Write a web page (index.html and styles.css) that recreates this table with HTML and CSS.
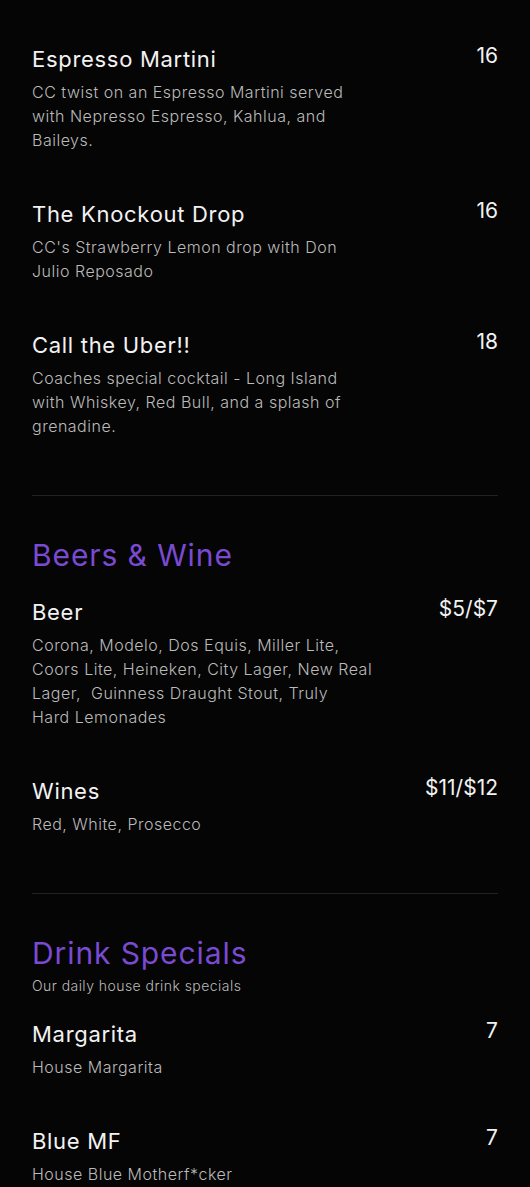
FILE: index.html
```html
<!DOCTYPE html>
<html lang="en">
<head>
    <meta charset="UTF-8">
    <meta name="viewport" content="width=device-width, initial-scale=1.0">
    <title>Drinks Menu</title>
    <link rel="stylesheet" href="styles.css">
</head>
<body>
    <main class="menu">
        <section class="menu-section">
            <div class="items">
                <div class="item">
                    <div class="item-head">
                        <h3 class="item-name">Espresso Martini</h3>
                        <span class="item-price">16</span>
                    </div>
                    <p class="item-desc">CC twist on an Espresso Martini served with Nepresso Espresso, Kahlua, and Baileys.</p>
                </div>
                <div class="item">
                    <div class="item-head">
                        <h3 class="item-name">The Knockout Drop</h3>
                        <span class="item-price">16</span>
                    </div>
                    <p class="item-desc">CC's Strawberry Lemon drop with Don Julio Reposado</p>
                </div>
                <div class="item">
                    <div class="item-head">
                        <h3 class="item-name">Call the Uber!!</h3>
                        <span class="item-price">18</span>
                    </div>
                    <p class="item-desc">Coaches special cocktail - Long Island with Whiskey, Red Bull, and a splash of grenadine.</p>
                </div>
            </div>
        </section>

        <hr class="divider">

        <section class="menu-section">
            <h2 class="section-title">Beers &amp; Wine</h2>
            <div class="items">
                <div class="item">
                    <div class="item-head">
                        <h3 class="item-name">Beer</h3>
                        <span class="item-price">$5/$7</span>
                    </div>
                    <p class="item-desc">Corona, Modelo, Dos Equis, Miller Lite, Coors Lite, Heineken, City Lager, New Real Lager,&nbsp; Guinness Draught Stout, Truly<br>Hard Lemonades</p>
                </div>
                <div class="item">
                    <div class="item-head">
                        <h3 class="item-name">Wines</h3>
                        <span class="item-price">$11/$12</span>
                    </div>
                    <p class="item-desc">Red, White, Prosecco</p>
                </div>
            </div>
        </section>

        <hr class="divider">

        <section class="menu-section">
            <h2 class="section-title with-sub">Drink Specials</h2>
            <p class="section-sub">Our daily house drink specials</p>
            <div class="items">
                <div class="item">
                    <div class="item-head">
                        <h3 class="item-name">Margarita</h3>
                        <span class="item-price">7</span>
                    </div>
                    <p class="item-desc">House Margarita</p>
                </div>
                <div class="item">
                    <div class="item-head">
                        <h3 class="item-name">Blue MF</h3>
                        <span class="item-price">7</span>
                    </div>
                    <p class="item-desc">House Blue Motherf*cker</p>
                </div>
            </div>
        </section>
    </main>
</body>
</html>
```

FILE: styles.css
```css
body {
    margin: 0;
    padding: 0;
    background: #050505;
    color: #f2f2f2;
    font-family: Inter, "Open Sans", sans-serif;
}
.menu {
    padding: 45px 32px 40px;
}
.items {
    display: flex;
    flex-direction: column;
    gap: 48px;
}
.item-head {
    display: flex;
    justify-content: space-between;
    align-items: flex-start;
}
.item-name {
    margin: 0;
    font-size: 22px;
    font-weight: 400;
    line-height: 28px;
    letter-spacing: 0.7px;
}
.item-price {
    font-size: 21px;
    font-weight: 400;
    line-height: 22px;
}
.item-desc {
    margin: 7px 0 0;
    max-width: 342px;
    font-size: 16px;
    font-weight: 300;
    line-height: 24px;
    color: #bababa;
    letter-spacing: 0.5px;
}
.divider {
    border: none;
    border-top: 1px solid #222;
    margin: 57px 0 41px;
}
.section-title {
    margin: 0 0 25px;
    font-size: 30px;
    font-weight: 400;
    line-height: 36px;
    color: #7a4ad2;
    letter-spacing: 0.9px;
}
.section-title.with-sub {
    margin-bottom: 6px;
}
.section-sub {
    margin: 0 0 25px;
    font-size: 14px;
    font-weight: 300;
    line-height: 18px;
    color: #bababa;
    letter-spacing: 0.45px;
}
```
